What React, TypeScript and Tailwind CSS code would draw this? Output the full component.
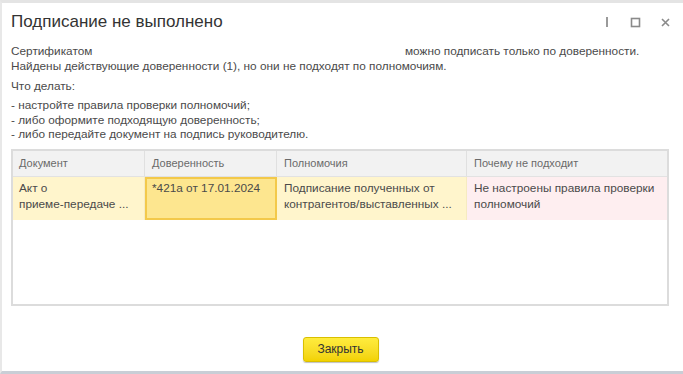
import React from "react";

export default function App() {
  return (
    <div
      className="w-[683px] h-[374px] bg-white overflow-hidden flex flex-col border-t-[3px] border-t-[#e4e4e4] border-l-2 border-l-[#e8e8e8] border-b-[3px] border-b-[#c9ced6] text-[#4a4a4a]"
      style={{ fontFamily: '"Liberation Sans", Arial, sans-serif' }}
    >
      <div className="flex items-center h-[36px] pl-[9px] pr-[12px] pt-[2px]">
        <div className="text-[17px] text-[#333] flex-1">Подписание не выполнено</div>
        <div className="flex items-center gap-[19px] text-[#8a8a8a]">
          <svg width="8" height="12" viewBox="0 0 8 12"><rect x="3" y="1" width="2" height="10" fill="#9a9a9a" /></svg>
          <svg width="11" height="11" viewBox="0 0 11 11"><rect x="1.5" y="1.5" width="8" height="8" fill="none" stroke="#8a8a8a" strokeWidth="1.6" /></svg>
          <svg width="11" height="11" viewBox="0 0 11 11"><path d="M2 2 L9 9 M9 2 L2 9" stroke="#8a8a8a" strokeWidth="1.6" /></svg>
        </div>
      </div>
      <div className="pl-[9px] pr-[14px] text-[11.8px] leading-[15px]">
        <div className="mt-[5px] flex">
          <span className="w-[394px]">Сертификатом</span>
          <span>можно подписать только по доверенности.</span>
        </div>
        <div>Найдены действующие доверенности (1), но они не подходят по полномочиям.</div>
        <div className="mt-[5px]">Что делать:</div>
        <div className="mt-[4px] leading-[14.5px]">
          <div>- настройте правила проверки полномочий;</div>
          <div>- либо оформите подходящую доверенность;</div>
          <div>- либо передайте документ на подпись руководителю.</div>
        </div>
        <div className="mt-[7px] h-[157px] border-2 border-[#dcdcdc] flex flex-col">
          <div className="flex h-[26px] bg-[#f2f2f2] border-b border-[#e2e2e2] text-[#6a6a6a] text-[11px]">
            <div className="w-[132px] pl-[6px] flex items-center border-r border-[#e0e0e0]">Документ</div>
            <div className="w-[132px] pl-[7px] flex items-center border-r border-[#e0e0e0]">Доверенность</div>
            <div className="w-[190px] pl-[7px] flex items-center border-r border-[#e0e0e0]">Полномочия</div>
            <div className="flex-1 pl-[7px] flex items-center">Почему не подходит</div>
          </div>
          <div className="flex h-[43px] text-[11.8px] leading-[16px] text-[#4a4a4a]">
            <div className="w-[132px] bg-[#fff5cc] pl-[6px] pt-[3px] border-r border-[#f6ebc0]">
              <div>Акт о</div>
              <div>приеме-передаче ...</div>
            </div>
            <div className="w-[132px] bg-[#fde68f] border-2 border-[#f3c94a] pl-[5px] pt-[1px]">
              *421а от 17.01.2024
            </div>
            <div className="w-[190px] bg-[#fff5cc] pl-[7px] pt-[3px] border-r border-[#f6ebc0]">
              <div>Подписание полученных от</div>
              <div>контрагентов/выставленных ...</div>
            </div>
            <div className="flex-1 bg-[#feeef0] pl-[7px] pt-[3px]">
              <div>Не настроены правила проверки</div>
              <div>полномочий</div>
            </div>
          </div>
        </div>
      </div>
      <div className="flex justify-center mt-[31px] pr-[4px]">
        <button className="w-[76px] h-[25px] rounded-[3px] border border-[#d9bf00] bg-gradient-to-b from-[#ffec3d] to-[#f2d200] text-[#333] text-[12px] shadow-[0_1px_1px_rgba(0,0,0,0.25)]">
          Закрыть
        </button>
      </div>
    </div>
  );
}
